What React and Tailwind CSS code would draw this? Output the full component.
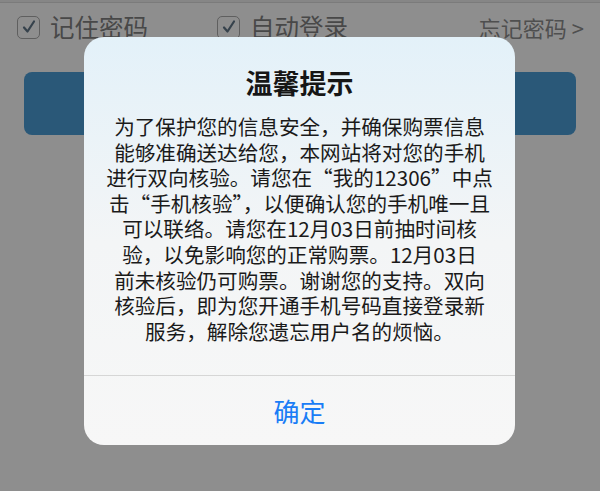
import React from "react";

const lines = [
  "为了保护您的信息安全，并确保购票信息",
  "能够准确送达给您，本网站将对您的手机",
  "进行双向核验。请您在“我的12306”中点",
  "击“手机核验”，以便确认您的手机唯一且",
  "可以联络。请您在12月03日前抽时间核",
  "验，以免影响您的正常购票。12月03日",
  "前未核验仍可购票。谢谢您的支持。双向",
  "核验后，即为您开通手机号码直接登录新",
  "服务，解除您遗忘用户名的烦恼。",
];

function Check() {
  return (
    <div className="w-[23px] h-[23px] rounded-[5px] border-[1.5px] border-[#5f5f5f] flex items-center justify-center">
      <svg width="16" height="16" viewBox="0 0 16 16">
        <path d="M3 8.5 L6.5 12.5 L13 2.5" fill="none" stroke="#36424c" strokeWidth="2.2" strokeLinecap="round" strokeLinejoin="round" />
      </svg>
    </div>
  );
}

export default function App() {
  return (
    <div
      className="relative w-[600px] h-[491px] overflow-hidden bg-[#8e8e8e]"
      style={{ fontFamily: '"Noto Sans CJK SC", "Noto Sans", sans-serif' }}
    >
      <div className="h-[3px] bg-[#868686] border-b border-[#7b7b7b]" />
      <div className="h-[48px] flex items-center pl-[17px] pr-[16px]">
        <div className="flex items-center gap-[10px] w-[200px]">
          <Check />
          <span className="text-[24.5px] leading-none text-[#484848]">记住密码</span>
        </div>
        <div className="flex items-center gap-[10px]">
          <Check />
          <span className="text-[24.5px] leading-none text-[#484848]">自动登录</span>
        </div>
        <div className="ml-auto text-[22px] leading-none text-[#4f4f4f]">忘记密码 &gt;</div>
      </div>
      <div className="mt-[21px] mx-[24px] h-[63px] rounded-[8px] bg-[#2a5878]" />

      <div className="absolute left-[84px] top-[37px] w-[431px] h-[408px] rounded-[20px] overflow-hidden flex flex-col bg-linear-to-b from-[#e3f1f9] via-[#f3f5f6] via-50% to-[#f7f7f7]">
        <div className="pt-[30px] text-center text-[27px] leading-[32px] font-bold text-[#161616]">温馨提示</div>
        <div className="mt-[15px] text-center text-[20.6px] leading-[25.6px] text-[#1a1a1a]">
          {lines.map((l, i) => (
            <div key={i} className="whitespace-nowrap h-[25.6px]">{l}</div>
          ))}
        </div>
        <div className="mt-auto h-[70px] border-t border-[#d6d6d6] flex items-center justify-center">
          <span className="text-[26px] leading-none text-[#1a7df6]">确定</span>
        </div>
      </div>
    </div>
  );
}
